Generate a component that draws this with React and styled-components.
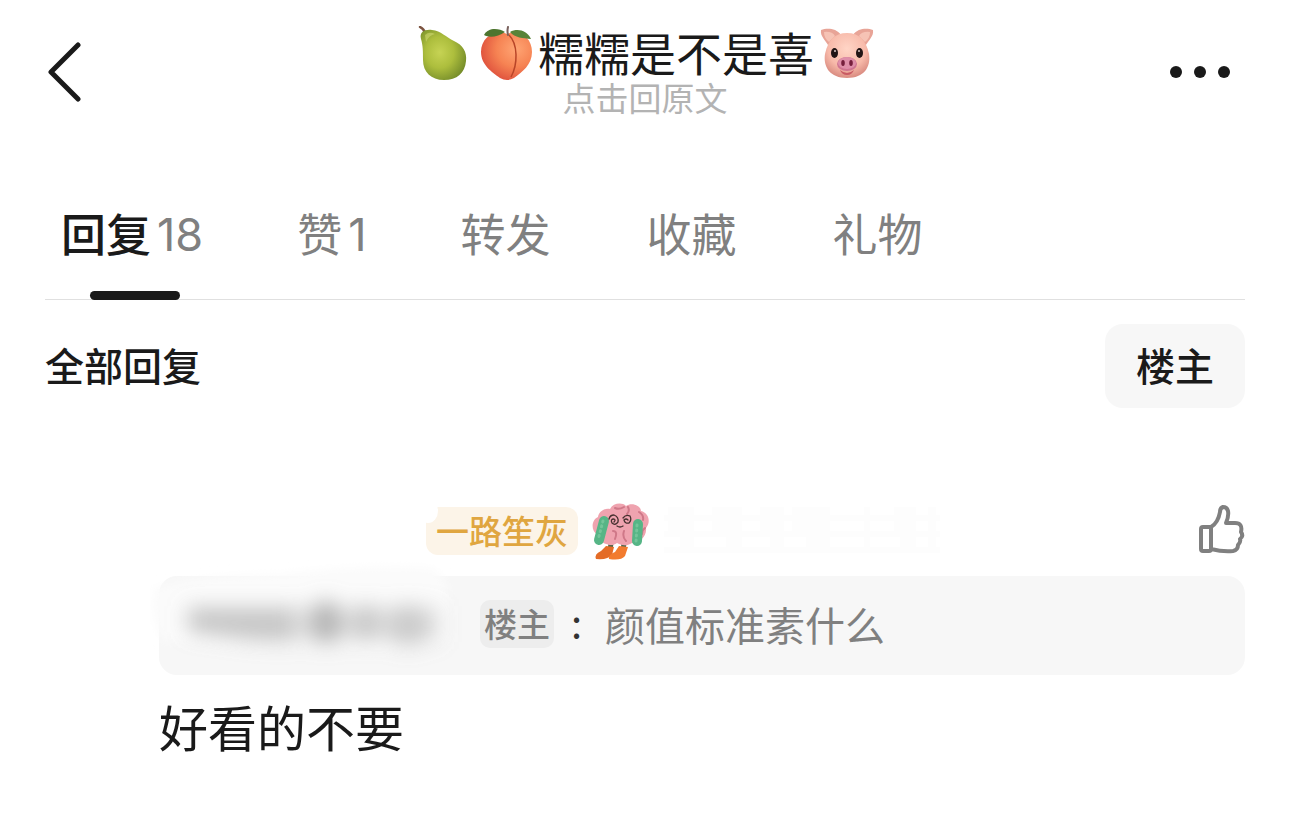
import styled, { createGlobalStyle } from "styled-components";

const tabs = [
  { label: "回复", count: 18, active: true },
  { label: "赞", count: 1 },
  { label: "转发" },
  { label: "收藏" },
  { label: "礼物" },
];

const Pear = () => (
  <svg width="52" height="56" viewBox="0 0 52 56" aria-hidden="true">
    <defs>
      <radialGradient id="pear" cx="0.42" cy="0.45" r="0.62">
        <stop offset="0" stopColor="#c6d354" />
        <stop offset="0.5" stopColor="#adbe3d" />
        <stop offset="1" stopColor="#768d2a" />
      </radialGradient>
    </defs>
    <path d="M4 1 Q8 3 9 7" fill="none" stroke="#7c5340" strokeWidth="2.5" strokeLinecap="round" />
    <path
      d="M5 13 C3 6 9 3 16 4 C25 5 30 11 38 15 C47 19 51 26 50 35 C49 47 41 54 28 54 C15 54 7 46 7 34 C7 25 7 20 5 13Z"
      fill="url(#pear)"
    />
    <path d="M9 9 Q13 5 19 8 Q13 9 10 16Z" fill="#d9e27c" opacity="0.5" />
  </svg>
);

const Peach = () => (
  <svg width="52" height="56" viewBox="0 0 52 56" aria-hidden="true">
    <defs>
      <radialGradient id="peach" cx="0.68" cy="0.35" r="0.75">
        <stop offset="0" stopColor="#ffa574" />
        <stop offset="0.5" stopColor="#f68353" />
        <stop offset="1" stopColor="#dc4b3a" />
      </radialGradient>
    </defs>
    <path
      d="M27 8 C39 3 52 11 52 26 C52 39 42 46 34 52 Q27 56 20 52 C12 46 1 39 1 26 C1 11 15 3 27 8Z"
      fill="url(#peach)"
    />
    <path d="M29 9 C38 18 38 38 31 51" fill="none" stroke="#b84528" strokeWidth="1.5" />
    <path d="M4 9 C8 1 19 2 25 6 C18 11 9 12 4 9Z" fill="#4d752f" />
    <path d="M30 6 C37 2 47 4 51 13 C43 12 35 12 30 6Z" fill="#588338" />
    <path d="M28 9 Q27 5 28 1" fill="none" stroke="#79605c" strokeWidth="2" strokeLinecap="round" />
  </svg>
);

const Pig = () => (
  <svg width="54" height="52" viewBox="0 0 54 52" aria-hidden="true">
    <defs>
      <radialGradient id="pig" cx="0.5" cy="0.35" r="0.65">
        <stop offset="0" stopColor="#ffd5c6" />
        <stop offset="0.65" stopColor="#f7b9a9" />
        <stop offset="1" stopColor="#da8c81" />
      </radialGradient>
    </defs>
    <path d="M1 2 C7 0 16 0 21 7 L9 19 C6 12 0 9 1 2Z" fill="#e8a497" />
    <path d="M53 2 C47 0 38 0 33 7 L45 19 C48 12 54 9 53 2Z" fill="#e8a497" />
    <path d="M4 4 Q12 3 15 8 L9 14 Q4 10 4 4Z" fill="#f6c3b5" />
    <path d="M50 4 Q42 3 39 8 L45 14 Q50 10 50 4Z" fill="#f6c3b5" />
    <path
      d="M27 5 C39 5 46 12 49 26 C51 39 44 50 27 50 C10 50 3 39 5 26 C8 12 15 5 27 5Z"
      fill="url(#pig)"
    />
    <ellipse cx="14.500" cy="25" rx="3.500" ry="5" fill="#211515" />
    <ellipse cx="39.500" cy="25" rx="3.500" ry="5" fill="#211515" />
    <circle cx="15" cy="23" r="1" fill="#d9c7c4" />
    <circle cx="39" cy="23" r="1" fill="#d9c7c4" />
    <path d="M20 42 Q27 48 34 42 Q32 47 27 47 Q22 47 20 42Z" fill="#c95b64" />
    <ellipse cx="27" cy="36" rx="10" ry="7" fill="#cf7490" />
    <ellipse cx="27" cy="35" rx="9" ry="6" fill="#df8fa9" />
    <ellipse cx="23" cy="35" rx="1.800" ry="3" fill="#761f3c" />
    <ellipse cx="31" cy="35" rx="1.800" ry="3" fill="#761f3c" />
  </svg>
);

const Mascot = () => (
  <svg width="60" height="58" viewBox="0 0 60 58" aria-hidden="true">
    <path d="M20 41 L19 49 M33 41 L32 49" stroke="#55684e" strokeWidth="5" />
    <path d="M15 44 L23 45 L21 53 Q17 58 5 57 Q3 52 10 49Z" fill="#e46c27" />
    <path d="M28 44 L37 45 L34 54 Q30 59 18 57 Q17 53 24 50Z" fill="#f27b2e" />
    <path
      d="M15 42 C9 41 10 34 6 32 C0 29 0 18 7 15 C8 9 14 6 19 7 C22 1 31 0 35 4 C41 0 50 4 50 9 C58 11 60 20 55 26 C56 34 49 41 41 41 C35 45 29 43 26 41 C22 44 18 43 15 42Z"
      fill="#efa3af"
    />
    <path
      d="M24 6 Q28 8 33 5 M37 5 Q39 9 36 12 M48 10 Q53 13 52 18 M22 29 Q27 29 24 37 M33 29 Q31 35 35 39 M54 26 Q51 28 51 32"
      fill="none"
      stroke="#cf7888"
      strokeWidth="2"
      strokeLinecap="round"
    />
    <path
      d="M13 19 L8 38 M47 22 L46 39"
      stroke="#56b586"
      strokeWidth="10"
      strokeLinecap="round"
    />
    <path
      d="M12 19 L7 38 M46 23 L45 40"
      stroke="#74c59a"
      strokeWidth="3"
      strokeLinecap="round"
      strokeDasharray="1 4"
    />
    <path
      d="M18 17 Q19 13 23 13 Q28 15 27 20 Q24 24 21 21 Q19 17 23 17 Q25 18 23 20 M32 16 Q35 12 39 14 Q41 18 38 21 Q34 22 33 18 Q35 16 37 18 M26 24 Q29 26 32 24"
      fill="none"
      stroke="#46302f"
      strokeWidth="1.300"
      strokeLinecap="round"
    />
  </svg>
);

// hides the quoted user's name
const NameBlur = () => (
  <Smudge width="320" height="120" viewBox="0 0 320 120" aria-hidden="true">
    <defs>
      <filter id="soft" x="-20%" y="-80%" width="140%" height="260%">
        <feGaussianBlur stdDeviation="10" />
      </filter>
      <filter id="edge" x="-10%" y="-20%" width="120%" height="140%">
        <feGaussianBlur stdDeviation="5" />
      </filter>
    </defs>
    <path
      d="M4 28 Q60 14 130 14 Q220 4 282 8 Q298 18 298 38 V80 Q250 98 190 88 Q90 92 12 80 Q-2 54 4 28Z"
      fill="#fbfbfb"
      filter="url(#edge)"
    />
    <g filter="url(#soft)" fill="#999">
      <path d="M36 46 H290 V82 H110 L36 72Z" opacity="0.25" />
      <path d="M40 48 H144 V82 L100 80 L40 72Z" opacity="0.35" />
      <ellipse cx="176" cy="62" rx="16" ry="22" opacity="0.6" />
      <ellipse cx="216" cy="62" rx="13" ry="18" opacity="0.35" />
      <ellipse cx="258" cy="66" rx="20" ry="22" opacity="0.3" />
    </g>
  </Smudge>
);

const FaintTrace = () => (
  <svg width="276" height="48" viewBox="0 0 276 48" fill="#fdfdfd" aria-hidden="true">
    <path d="M0 8 H276 V14 H0Z M0 24 H276 V30 H0Z M0 40 H276 V46 H0Z" />
    <path d="M4 0 H30 V46 H16 V30 H4Z M48 0 H78 V46 H62 V30 H48Z M96 0 H120 V46 H106 V30 H96Z M128 0 H166 V46 H142 V30 H128Z M200 0 H206 V46 H200Z M230 0 H252 V46 H236 V24 H230Z M264 0 H272 V46 H264Z" />
  </svg>
);

const App = () => {
  return (
    <Page>
      <GlobalStyle />
      <Header>
        <IconButton aria-label="返回">
          <svg width="36" height="64" viewBox="0 0 36 64">
            <path
              d="M33 5 L6 32 L33 59"
              fill="none"
              stroke="#1a1a1a"
              strokeWidth="5"
              strokeLinecap="round"
              strokeLinejoin="round"
            />
          </svg>
        </IconButton>
        <Heading>
          <Title>
            <Pear />
            <Peach />
            <span>糯糯是不是喜</span>
            <Pig />
          </Title>
          <Origin href="#post">点击回原文</Origin>
        </Heading>
        <IconButton aria-label="更多" $end>
          <svg width="60" height="12" viewBox="0 0 60 12" fill="#1a1a1a">
            <circle cx="6" cy="6" r="6" />
            <circle cx="30" cy="6" r="6" />
            <circle cx="54" cy="6" r="6" />
          </svg>
        </IconButton>
      </Header>

      <Tabs>
        {tabs.map((tab) => (
          <Tab key={tab.label} $active={tab.active}>
            {tab.label}
            {tab.count && <Count>{tab.count}</Count>}
          </Tab>
        ))}
      </Tabs>

      <Toolbar>
        <SectionTitle>全部回复</SectionTitle>
        <FilterButton>楼主</FilterButton>
      </Toolbar>

      <Reply>
        <ReplyHead>
          <FanBadge>一路笙灰</FanBadge>
          <Mascot />
          <FaintTrace />
          <LikeButton aria-label="赞">
            <svg width="48" height="52" viewBox="0 0 48 52">
              <path
                d="M14 44 V22 H6 Q4 22 4 24 V44 Q4 46 6 46 H12 Q14 46 14 44 Q26 47 36 46 Q41 45 41 40 Q44 37 43 34 Q47 31 44 27 Q46 18 38 18 H29 Q32 11 31 6 Q30 2 26 2 Q23 3 23 7 Q21 18 14 22"
                fill="none"
                stroke="#808080"
                strokeWidth="4"
                strokeLinejoin="round"
              />
            </svg>
          </LikeButton>
        </ReplyHead>
        <Quote>
          <NameBlur />
          <OwnerTag>楼主</OwnerTag>
          <Colon>:</Colon>
          <span>颜值标准素什么</span>
        </Quote>
        <ReplyText>好看的不要</ReplyText>
      </Reply>
    </Page>
  );
};

export default App;

const GlobalStyle = createGlobalStyle`
  * {
    box-sizing: border-box;
  }
  body {
    margin: 0;
    background: #fff;
    color: #1a1a1a;
    font-family: "Noto Sans CJK SC", sans-serif;
  }
  svg {
    display: block;
    flex-shrink: 0;
  }
  button {
    border: 0;
    padding: 0;
    background: none;
    color: inherit;
    font: inherit;
    cursor: pointer;
  }
  h1, h2, p {
    margin: 0;
    font-weight: 400;
  }
`;

const Page = styled.main`
  padding: 0 45px;
`;

const Header = styled.header`
  display: grid;
  grid-template-columns: 80px 1fr 80px;
  align-items: center;
  height: 144px;
`;

const IconButton = styled.button`
  display: flex;
  align-items: center;
  justify-content: ${(props) => (props.$end ? "flex-end" : "flex-start")};
  height: 80px;
  padding-right: ${(props) => (props.$end ? "15px" : "0")};
`;

const Heading = styled.div`
  display: flex;
  flex-direction: column;
  align-items: center;
  padding-bottom: 6px;
`;

const Title = styled.h1`
  display: flex;
  align-items: center;
  gap: 8px;
  height: 56px;
  font-size: 46px;
  line-height: 56px;

  svg + svg {
    margin-left: 4px;
  }
  span {
    margin: 0 -2px 6px;
  }
`;

const Origin = styled.a`
  font-size: 33px;
  line-height: 30px;
  color: #b3b3b3;
  text-decoration: none;
`;

const Tabs = styled.nav`
  display: flex;
  gap: 96px;
  height: 156px;
  padding: 48px 16px 0;
  border-bottom: 1px solid #e0e0e0;
`;

const Tab = styled.button`
  position: relative;
  display: flex;
  align-items: center;
  gap: 6px;
  height: 84px;
  padding-bottom: 4px;
  font-size: 45px;
  font-weight: ${(props) => (props.$active ? 500 : 400)};
  color: ${(props) => (props.$active ? "#1a1a1a" : "#808080")};

  &::after {
    content: "";
    display: ${(props) => (props.$active ? "block" : "none")};
    position: absolute;
    left: 29px;
    bottom: -24px;
    width: 90px;
    height: 9px;
    border-radius: 5px;
    background: #1a1a1a;
  }
`;

const Count = styled.span`
  margin-right: -2px;
  padding-top: 4px;
  font-family: Inter, sans-serif;
  font-weight: 400;
  color: #808080;
`;

const Toolbar = styled.div`
  display: flex;
  align-items: center;
  justify-content: space-between;
  margin-top: 24px;
`;

const SectionTitle = styled.h2`
  padding-bottom: 4px;
  font-size: 39px;
  font-weight: 500;
`;

const FilterButton = styled.button`
  height: 84px;
  padding: 0 31px 4px;
  border-radius: 18px;
  background: #f7f7f7;
  font-size: 39px;
  font-weight: 500;
`;

const Reply = styled.article`
  margin-top: 92px;
  padding-left: 114px;
`;

const ReplyHead = styled.div`
  display: flex;
  align-items: center;
  gap: 13px;
  height: 62px;
  padding-left: 267px;
`;

const FanBadge = styled.span`
  position: relative;
  height: 48px;
  padding: 0 10px;
  border-radius: 12px;
  background: #fcf4e8;
  font-size: 33px;
  font-weight: 500;
  line-height: 46px;
  color: #e0a640;

  &::before {
    content: "";
    position: absolute;
    left: -8px;
    top: -8px;
    width: 20px;
    height: 24px;
    border-radius: 50%;
    background: #fff;
  }
`;

const LikeButton = styled.button`
  margin-left: auto;
`;

const Quote = styled.blockquote`
  position: relative;
  display: flex;
  align-items: center;
  height: 99px;
  margin: 14px 0 0;
  padding: 0 0 3px 321px;
  border-radius: 18px;
  background: #f7f7f7;
  font-size: 40px;
  color: #808080;
`;

const Smudge = styled.svg`
  position: absolute;
  left: -9px;
  top: -16px;
`;

const OwnerTag = styled.span`
  height: 48px;
  padding: 0 4px;
  border-radius: 10px;
  background: #ededed;
  font-size: 33px;
  font-weight: 500;
  line-height: 46px;
`;

const Colon = styled.span`
  width: 51px;
  padding: 0 6px 6px 0;
  text-align: center;
  color: #333;
`;

const ReplyText = styled.p`
  margin-top: 13px;
  font-size: 49px;
  line-height: 76px;
`;
